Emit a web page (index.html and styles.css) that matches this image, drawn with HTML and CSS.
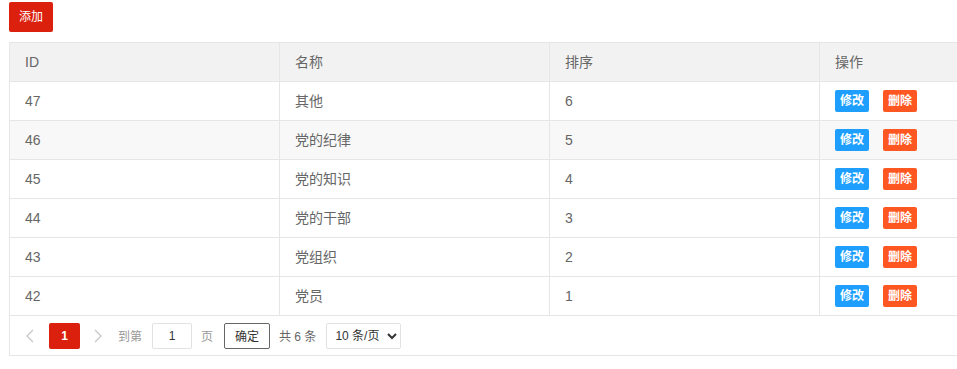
FILE: index.html
```html
<!DOCTYPE html>
<html lang="zh-CN">
<head>
<meta charset="utf-8">
<title>分类列表</title>
<link rel="stylesheet" href="styles.css">
</head>
<body>
<div class="page">
  <button class="btn-add" type="button">添加</button>
  <div class="table">
    <div class="row head">
      <div class="cell">ID</div>
      <div class="cell">名称</div>
      <div class="cell">排序</div>
      <div class="cell">操作</div>
    </div>
    <div class="row">
      <div class="cell">47</div><div class="cell">其他</div><div class="cell">6</div>
      <div class="cell ops"><span class="op op-edit">修改</span><span class="op op-del">删除</span></div>
    </div>
    <div class="row hover">
      <div class="cell">46</div><div class="cell">党的纪律</div><div class="cell">5</div>
      <div class="cell ops"><span class="op op-edit">修改</span><span class="op op-del">删除</span></div>
    </div>
    <div class="row">
      <div class="cell">45</div><div class="cell">党的知识</div><div class="cell">4</div>
      <div class="cell ops"><span class="op op-edit">修改</span><span class="op op-del">删除</span></div>
    </div>
    <div class="row">
      <div class="cell">44</div><div class="cell">党的干部</div><div class="cell">3</div>
      <div class="cell ops"><span class="op op-edit">修改</span><span class="op op-del">删除</span></div>
    </div>
    <div class="row">
      <div class="cell">43</div><div class="cell">党组织</div><div class="cell">2</div>
      <div class="cell ops"><span class="op op-edit">修改</span><span class="op op-del">删除</span></div>
    </div>
    <div class="row">
      <div class="cell">42</div><div class="cell">党员</div><div class="cell">1</div>
      <div class="cell ops"><span class="op op-edit">修改</span><span class="op op-del">删除</span></div>
    </div>
    <div class="pager">
      <span class="pg-arrow pg-prev"><svg width="8" height="14" viewBox="0 0 8 14"><path d="M7 1 L1 7 L7 13" fill="none" stroke="#c9c9c9" stroke-width="1.4"/></svg></span>
      <span class="pg-cur">1</span>
      <span class="pg-arrow pg-next"><svg width="8" height="14" viewBox="0 0 8 14"><path d="M1 1 L7 7 L1 13" fill="none" stroke="#c9c9c9" stroke-width="1.4"/></svg></span>
      <span class="pg-label pg-to">到第</span>
      <input class="pg-input" type="text" value="1">
      <span class="pg-label pg-page">页</span>
      <button class="pg-btn" type="button">确定</button>
      <span class="pg-count">共 6 条</span>
      <select class="pg-select"><option>10 条/页</option><option>20 条/页</option></select>
    </div>
  </div>
</div>
</body>
</html>
```
FILE: styles.css
```css
html, body {
  margin: 0;
  padding: 0;
  background: #fff;
  overflow: hidden;
}
body {
  font-family: "Liberation Sans", Arial, "Noto Sans CJK SC", sans-serif;
  color: #666;
}
.page {
  padding: 2px 0 0 9px;
  width: 948px;
  overflow: hidden;
}
.btn-add {
  display: block;
  height: 30px;
  padding: 0 10px;
  border: none;
  border-radius: 2px;
  background: #db210e;
  color: #fff;
  font-family: inherit;
  font-size: 12px;
  line-height: 30px;
}
.table {
  margin-top: 10px;
  width: 1082px;
  border-top: 1px solid #e6e6e6;
  border-left: 1px solid #e6e6e6;
}
.row {
  display: flex;
  height: 38px;
  border-bottom: 1px solid #e6e6e6;
}
.row.head { background: #f2f2f2; }
.row.hover { background: #f8f8f8; }
.cell {
  box-sizing: border-box;
  width: 270px;
  flex: none;
  padding: 0 15px;
  border-right: 1px solid #e6e6e6;
  font-size: 14px;
  line-height: 38px;
  color: #666;
}
.ops {
  display: flex;
  align-items: center;
  gap: 14px;
}
.op {
  display: inline-block;
  width: 34px;
  height: 22px;
  line-height: 22px;
  text-align: center;
  font-size: 12px;
  font-weight: bold;
  color: #fff;
  border-radius: 2px;
}
.op-edit { background: #1e9fff; }
.op-del { background: #ff5722; }
.pager {
  display: flex;
  align-items: center;
  height: 39px;
  border-bottom: 1px solid #e6e6e6;
  font-size: 12px;
}
.pg-arrow {
  display: flex;
  align-items: center;
  justify-content: center;
  width: 30px;
  height: 26px;
}
.pg-prev { margin-left: 5px; }
.pg-cur {
  width: 31px;
  height: 26px;
  line-height: 26px;
  margin-left: 4px;
  margin-right: 3px;
  text-align: center;
  background: #db210e;
  color: #fff;
  border-radius: 2px;
  font-weight: bold;
}
.pg-label { color: #999; }
.pg-to { margin-left: 5px; }
.pg-input {
  box-sizing: border-box;
  width: 40px;
  height: 26px;
  margin: 0 0 0 10px;
  padding: 0;
  border: 1px solid #e2e2e2;
  border-radius: 2px;
  text-align: center;
  font-family: inherit;
  font-size: 12px;
  color: #333;
}
.pg-page { margin-left: 9px; }
.pg-btn {
  box-sizing: border-box;
  width: 46px;
  height: 26px;
  margin-left: 11px;
  padding: 0;
  border: 1px solid #666;
  border-radius: 2px;
  background: #fff;
  font-family: inherit;
  font-size: 12px;
  color: #333;
}
.pg-count {
  margin-left: 9px;
  color: #666;
}
.pg-select {
  box-sizing: border-box;
  width: 75px;
  height: 26px;
  margin-left: 10px;
  padding: 0 4px;
  border: 1px solid #e2e2e2;
  border-radius: 2px;
  background: #fff;
  font-family: inherit;
  font-size: 12px;
  color: #333;
}
```
